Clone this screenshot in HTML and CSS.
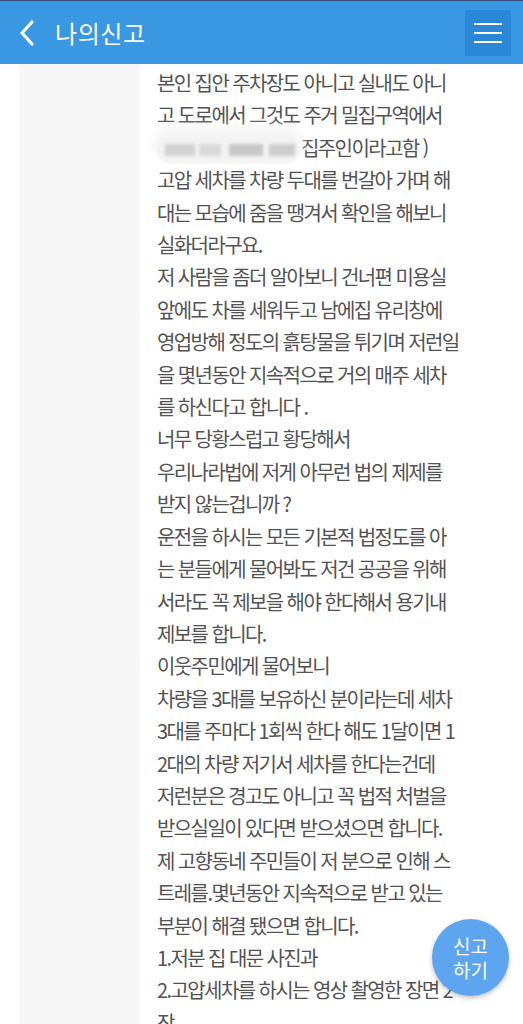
FILE: index.html
```html
<!DOCTYPE html>
<html lang="ko">
<head>
<meta charset="utf-8">
<title>나의신고</title>
<link rel="stylesheet" href="styles.css">
</head>
<body>
<header class="topbar">
  <div class="topbar-left">
    <svg class="back" width="18" height="26" viewBox="0 0 18 26"><path d="M14 2 L4 13 L14 24" fill="none" stroke="#fff" stroke-width="3.2" stroke-linecap="round" stroke-linejoin="round"/></svg>
    <h1 class="title">나의신고</h1>
  </div>
  <button class="menu" aria-label="메뉴">
    <span class="bar"></span><span class="bar"></span><span class="bar"></span>
  </button>
</header>
<main class="page">
  <aside class="side"></aside>
  <article class="content">
    <div class="line">본인 집안 주차장도 아니고 실내도 아니</div>
    <div class="line">고 도로에서 그것도 주거 밀집구역에서</div>
    <div class="line"><span class="blur"><span class="px p1"></span><span class="px p2"></span><span class="px p3"></span><span class="px p4"></span></span>집주인이라고함 )</div>
    <div class="line">고압 세차를 차량 두대를 번갈아 가며 해</div>
    <div class="line">대는 모습에 줌을 땡겨서 확인을 해보니</div>
    <div class="line">실화더라구요.</div>
    <div class="line">저 사람을 좀더 알아보니 건너편 미용실</div>
    <div class="line">앞에도 차를 세워두고 남에집 유리창에</div>
    <div class="line">영업방해 정도의 흙탕물을 튀기며 저런일</div>
    <div class="line">을 몇년동안 지속적으로 거의 매주 세차</div>
    <div class="line">를 하신다고 합니다 .</div>
    <div class="line">너무 당황스럽고 황당해서</div>
    <div class="line">우리나라법에 저게 아무런 법의 제제를</div>
    <div class="line">받지 않는겁니까 ?</div>
    <div class="line">운전을 하시는 모든 기본적 법정도를 아</div>
    <div class="line">는 분들에게 물어봐도 저건 공공을 위해</div>
    <div class="line">서라도 꼭 제보을 해야 한다해서 용기내</div>
    <div class="line">제보를 합니다.</div>
    <div class="line">이웃주민에게 물어보니</div>
    <div class="line">차량을 3대를 보유하신 분이라는데 세차</div>
    <div class="line">3대를 주마다 1회씩 한다 해도 1달이면 1</div>
    <div class="line">2대의 차량 저기서 세차를 한다는건데</div>
    <div class="line">저런분은 경고도 아니고 꼭 법적 처벌을</div>
    <div class="line">받으실일이 있다면 받으셨으면 합니다.</div>
    <div class="line">제 고향동네 주민들이 저 분으로 인해 스</div>
    <div class="line">트레를.몇년동안 지속적으로 받고 있는</div>
    <div class="line">부분이 해결 됐으면 합니다.</div>
    <div class="line">1.저분 집 대문 사진과</div>
    <div class="line">2.고압세차를 하시는 영상 촬영한 장면 2</div>
    <div class="line">장</div>
  </article>
</main>
<button class="fab"><span class="fab-line">신고</span><span class="fab-line">하기</span></button>
</body>
</html>
```

FILE: styles.css
```css
* { box-sizing: border-box; }
html, body { margin: 0; padding: 0; }
body {
  width: 523px;
  height: 1024px;
  overflow: hidden;
  background: #ffffff;
  font-family: "Noto Sans CJK KR", "Roboto", sans-serif;
}
.topbar {
  height: 64px;
  background: #3a97e1;
  border-top: 1px solid #34537e;
  display: flex;
  align-items: center;
  justify-content: space-between;
  padding: 0 12px 0 18px;
}
.topbar-left {
  display: flex;
  align-items: center;
  gap: 19px;
}
.back { display: block; margin-top: 1px; }
.title {
  margin: 0;
  color: #ffffff;
  font-size: 24px;
  font-weight: 400;
  letter-spacing: 0.6px;
  line-height: 1;
}
.menu {
  width: 46px;
  height: 46px;
  background: #2a86d6;
  border: none;
  border-radius: 2px;
  display: flex;
  flex-direction: column;
  align-items: center;
  justify-content: center;
  gap: 7px;
  padding: 0;
}
.bar {
  display: block;
  width: 28px;
  height: 2px;
  background: #ffffff;
}
.page {
  display: flex;
  padding-left: 19px;
  height: 960px;
}
.side {
  width: 121px;
  flex: none;
  background: #f7f7f7;
}
.content {
  padding: 3px 0 0 17px;
  color: #525252;
  font-size: 20px;
  letter-spacing: -1.6px;
  line-height: 32.4px;
}
.line { white-space: nowrap; }
.blur {
  display: inline-block;
  position: relative;
  width: 142px;
  height: 26px;
  vertical-align: middle;
  margin-right: 2px;
  background: #f3f3f3;
  border-radius: 14px;
  box-shadow: 0 -6px 10px 4px #f5f5f5;
}
.px {
  position: absolute;
  top: 7px;
  height: 12px;
  background: #c9c9c9;
  filter: blur(1.5px);
}
.p1 { left: 8px; width: 30px; background: #d2d2d2; }
.p2 { left: 42px; width: 22px; background: #dadada; }
.p3 { left: 72px; width: 34px; background: #c8c8c8; }
.p4 { left: 112px; width: 26px; background: #cdcdcd; }
.fab {
  position: absolute;
  left: 432px;
  top: 919px;
  width: 77px;
  height: 77px;
  border-radius: 50%;
  border: none;
  background: #5ea5ef;
  color: #ffffff;
  font-family: "Noto Sans CJK KR", sans-serif;
  font-size: 19px;
  line-height: 24px;
  padding: 0;
  display: flex;
  flex-direction: column;
  align-items: center;
  justify-content: center;
  box-shadow: 0 2px 5px rgba(0,0,0,0.25);
}
.fab-line { display: block; }
```
